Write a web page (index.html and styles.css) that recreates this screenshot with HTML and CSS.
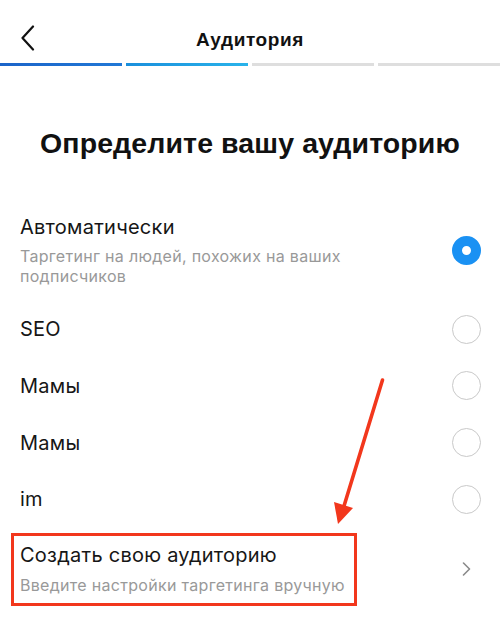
FILE: index.html
```html
<!DOCTYPE html>
<html lang="ru">
<head>
<meta charset="utf-8">
<title>Аудитория</title>
<link rel="stylesheet" href="styles.css">
</head>
<body>
<div class="page">
  <header class="topbar">
    <button class="back" aria-label="Назад">
      <svg width="16" height="26" viewBox="0 0 16 26"><path d="M13 1.5 L2.5 13 L13 24.5" fill="none" stroke="#111" stroke-width="2.2" stroke-linecap="round" stroke-linejoin="round"/></svg>
    </button>
    <h1 class="title">Аудитория</h1>
  </header>
  <div class="progress">
    <span class="seg seg-done1"></span>
    <span class="seg seg-done2"></span>
    <span class="seg"></span>
    <span class="seg"></span>
  </div>

  <h2 class="heading">Определите вашу аудиторию</h2>

  <ul class="options">
    <li class="opt opt-auto">
      <div class="opt-text">
        <div class="opt-title">Автоматически</div>
        <div class="opt-sub">Таргетинг на людей, похожих на ваших<br>подписчиков</div>
      </div>
      <span class="radio radio-on"></span>
    </li>
    <li class="opt"><div class="opt-title">SEO</div><span class="radio"></span></li>
    <li class="opt"><div class="opt-title">Мамы</div><span class="radio"></span></li>
    <li class="opt"><div class="opt-title">Мамы</div><span class="radio"></span></li>
    <li class="opt"><div class="opt-title">im</div><span class="radio"></span></li>
    <li class="opt opt-create">
      <div class="highlight">
        <div class="opt-title">Создать свою аудиторию</div>
        <div class="opt-sub">Введите настройки таргетинга вручную</div>
      </div>
      <span class="chev">
        <svg width="9" height="14" viewBox="0 0 9 14"><path d="M1.5 1 L7.5 7 L1.5 13" fill="none" stroke="#8a8a8a" stroke-width="1.6" stroke-linecap="round" stroke-linejoin="round"/></svg>
      </span>
    </li>
  </ul>

  <svg class="annot-arrow" width="500" height="624" viewBox="0 0 500 624">
    <line x1="382.5" y1="380" x2="344" y2="506" stroke="#f2371c" stroke-width="3.6" stroke-linecap="round"/>
    <polygon points="334,502 353,508 338,524" fill="#f2371c"/>
  </svg>
</div>
</body>
</html>
```
FILE: styles.css
```css
* { box-sizing: border-box; }
html, body { margin: 0; padding: 0; background: #fff; }
body { font-family: "Inter", "Roboto", "Liberation Sans", sans-serif; color: #111; }
.page { position: relative; width: 500px; height: 624px; overflow: hidden; }

.topbar { position: relative; height: 63px; display: flex; align-items: center; justify-content: center; }
.back { position: absolute; left: 20px; top: 25px; padding: 0; border: 0; background: none; width: 16px; height: 26px; }
.back svg { display: block; }
.title { margin: 0; font-family: "Liberation Sans", Arial, sans-serif; font-weight: 700; font-size: 19px; letter-spacing: 0.6px; color: #111; padding-top: 16px; }

.progress { display: flex; gap: 4px; height: 3px; }
.seg { flex: 1; background: #dedede; }
.seg-done1 { background: linear-gradient(90deg, #1b64c9, #2178d6); }
.seg-done2 { background: linear-gradient(90deg, #1a8fdc, #29b3ea); }

.heading { margin: 0; padding: 60px 0 38px; text-align: center; font-family: "Liberation Sans", Arial, sans-serif; font-weight: 700; font-size: 28.5px; line-height: 34px; color: #111; letter-spacing: 0.1px; }

.options { list-style: none; margin: 0; padding: 0; }
.opt { display: flex; align-items: center; justify-content: space-between; height: 56.67px; padding: 0 19px 0 20px; }
.opt-auto { height: 103px; padding-top: 17px; padding-bottom: 15px; }
.opt-title { font-size: 20px; line-height: 24px; color: #161616; letter-spacing: 0.25px; }
.opt-sub { margin-top: 7px; font-size: 16px; line-height: 20px; color: #999; letter-spacing: 0.3px; }

.radio { flex: none; width: 29px; height: 29px; border-radius: 50%; border: 1.5px solid #c9c9c9; }
.radio-on { border: 10px solid #1a91f3; }

.opt-create { height: 83px; padding-left: 11px; }
.highlight { border: 3px solid #f2371c; padding: 7px 9px 8px 6px; }
.highlight .opt-sub { margin-top: 8px; }
.chev { flex: none; width: 29px; display: flex; justify-content: center; }
.chev svg { display: block; }

.annot-arrow { position: absolute; left: 0; top: 0; pointer-events: none; }
```
